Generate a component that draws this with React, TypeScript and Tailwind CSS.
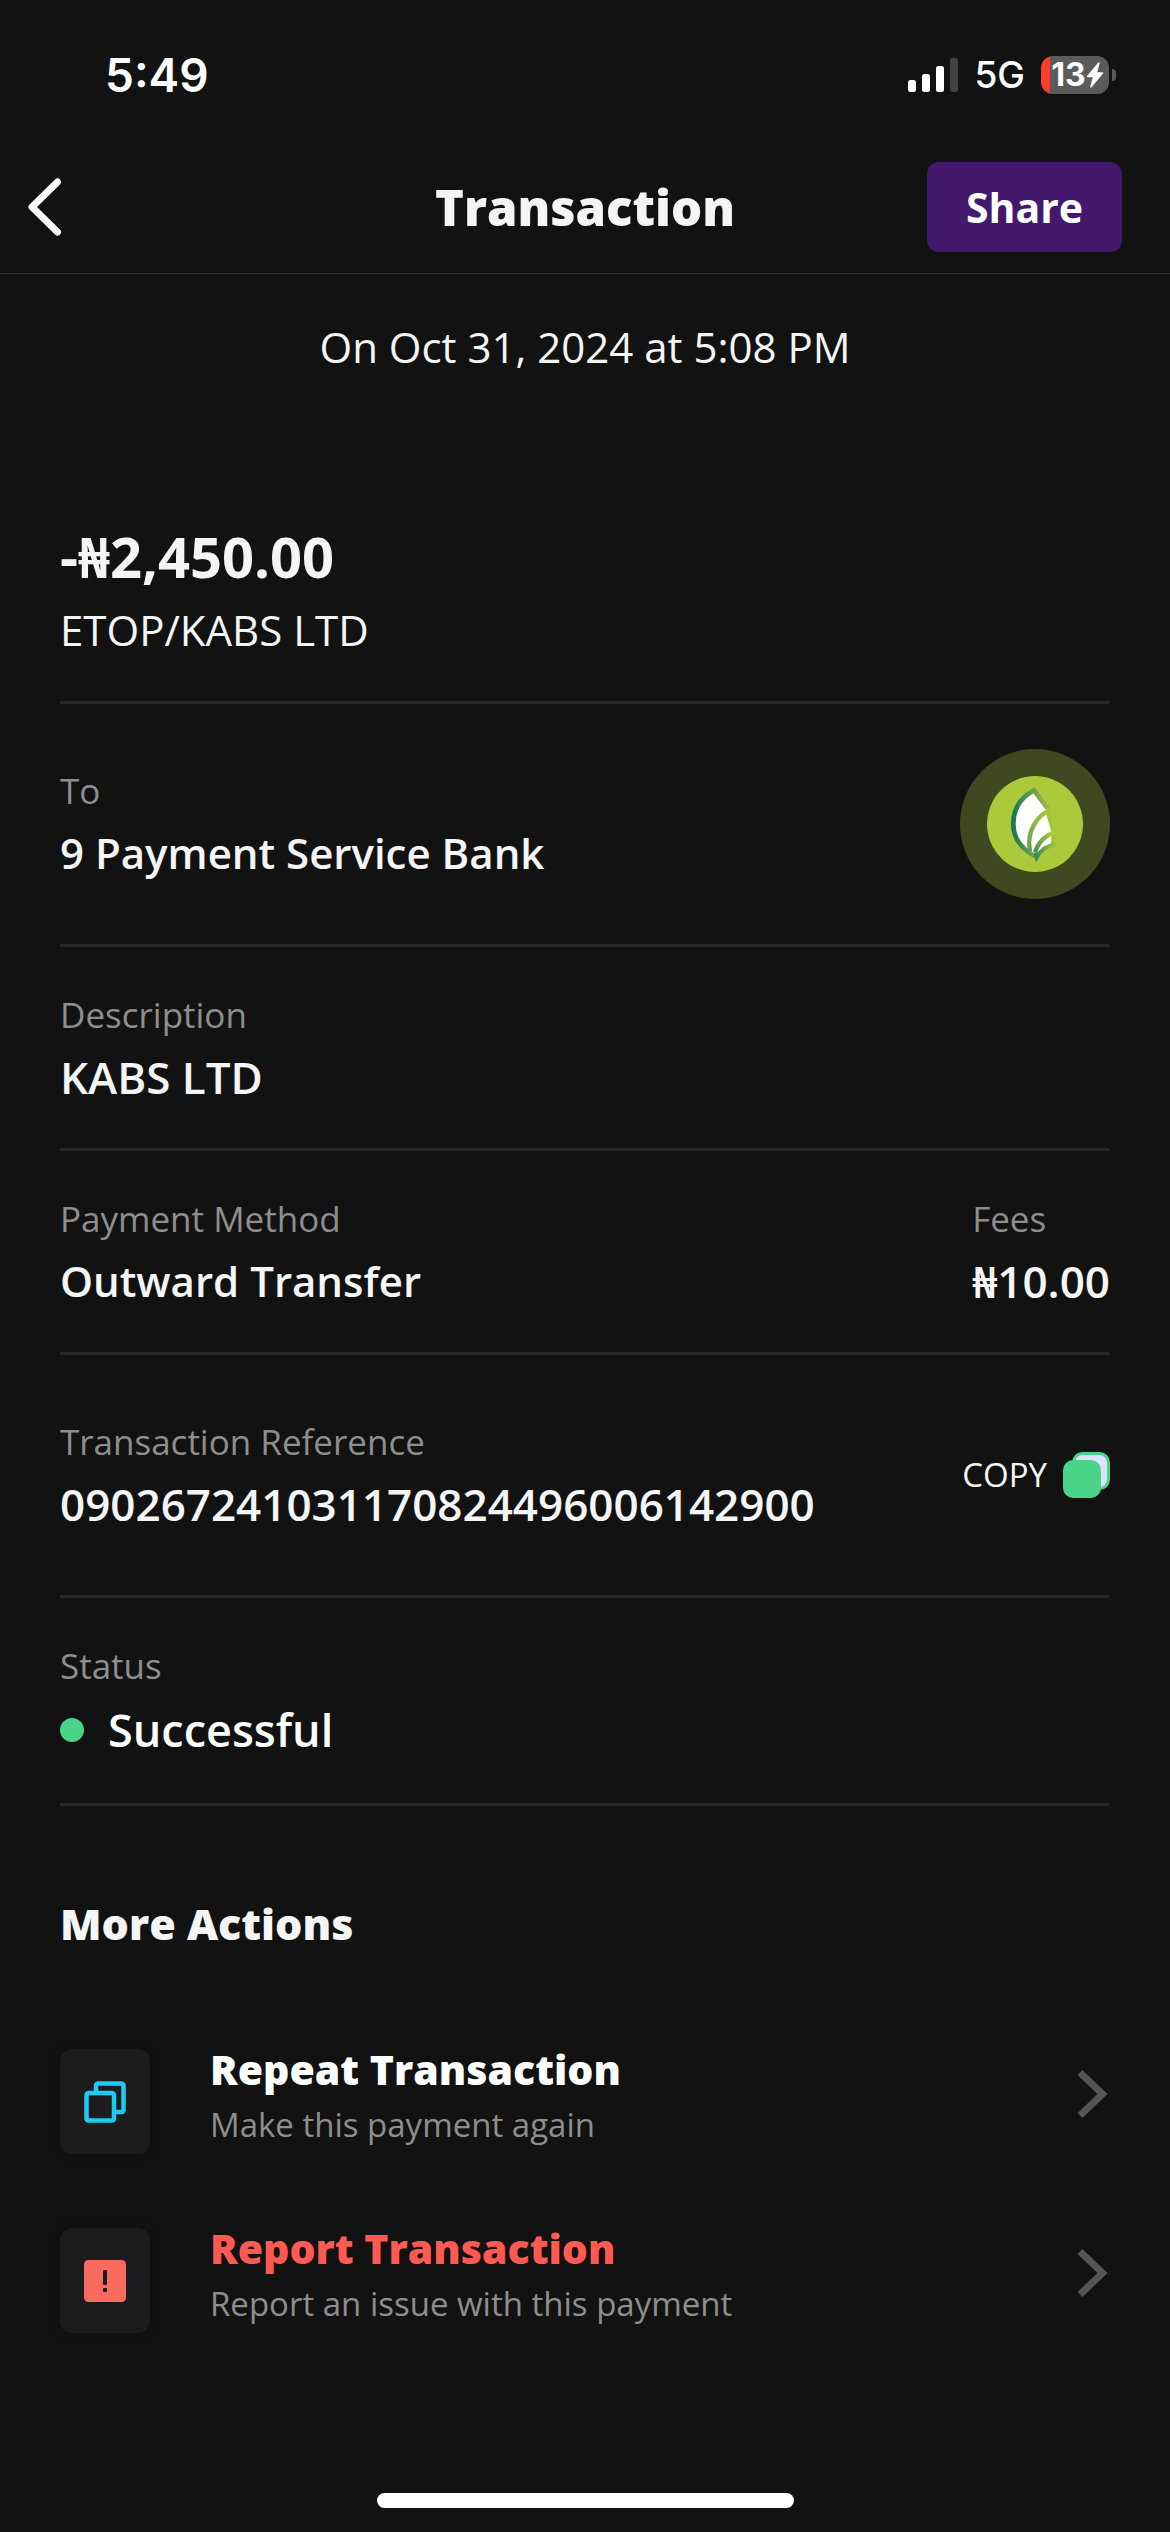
import type { ReactNode } from "react";

const SANS = "font-['Open_Sans','Noto_Sans',sans-serif]";
const SYSTEM = "font-['Inter',sans-serif]";

function StatusBar() {
  return (
    <div className={`${SYSTEM} flex items-center justify-between pt-[47px] pb-[38px] pl-[105px] pr-[54px] text-white`}>
      <time className="text-[46px] leading-[56px] font-semibold">5:49</time>
      <div className="flex items-center">
        <svg width="50" height="34" viewBox="0 0 50 34" className="mr-4" aria-label="Signal strength">
          <rect x="0" y="22" width="8" height="12" rx="2.5" fill="#fff" />
          <rect x="14" y="16" width="8" height="18" rx="2.5" fill="#fff" />
          <rect x="28" y="8" width="8" height="26" rx="2.5" fill="#fff" />
          <rect x="42" y="0" width="8" height="34" rx="2.5" fill="#434343" />
        </svg>
        <span className="mr-4 text-[37px] leading-[56px] font-medium">5G</span>
        <div className="flex items-center gap-[3px]" aria-label="Battery 13 percent, charging">
          <div className="flex h-[38px] w-[68px] items-center justify-center overflow-hidden rounded-[12px] bg-[linear-gradient(90deg,#ff3b30_9px,#5b5b5b_9px)] pl-[5px]">
            <span className="text-[32px] leading-[38px] font-bold">13</span>
            <svg width="18" height="26" viewBox="0 0 18 26" fill="#fff" aria-hidden="true">
              <path d="M12.3.6 1 13.9c-.5.6-.2 1.3.6 1.3h5.2L4.3 24.6c-.3 1.1.6 1.4 1.3.6L17 11.6c.5-.7.2-1.3-.6-1.3h-5.2l2.4-9.1c.3-1.1-.6-1.4-1.3-.6Z" />
            </svg>
          </div>
          <div className="h-3 w-1 rounded-r-full bg-[#5b5b5b]" />
        </div>
      </div>
    </div>
  );
}

function Header() {
  return (
    <header className="grid grid-cols-[1fr_auto_1fr] items-center border-b border-[#333333] py-[21px]">
      <button type="button" aria-label="Back" className="ml-6 justify-self-start">
        <svg width="42" height="66" viewBox="0 0 42 66" fill="none" stroke="#fff" strokeWidth="7" strokeLinecap="round" strokeLinejoin="round">
          <path d="M33.5 8 8 33l25.5 25" />
        </svg>
      </button>
      <h1 className="text-[49px] leading-[68px] font-extrabold text-[#f5f5f5]">Transaction</h1>
      <button type="button" className="mr-12 h-[90px] w-[195px] justify-self-end rounded-[12px] bg-[#42196b] text-[41px] leading-[56px] font-bold text-white">
        Share
      </button>
    </header>
  );
}

function Field({ label, size = "text-[42px]", children }: { label: string; size?: string; children: ReactNode }) {
  return (
    <div className="flex flex-col gap-[10px]">
      <dt className="text-[35px] leading-[48px] text-[#8e8e8e]">{label}</dt>
      <dd className={`${size} leading-[56px] font-semibold text-[#f5f5f5]`}>{children}</dd>
    </div>
  );
}

function BankLogo() {
  return (
    <div className="flex size-[150px] items-center justify-center rounded-full bg-[#40481f]">
      <svg width="96" height="96" viewBox="0 0 288 288" fill="none" aria-label="9 Payment Service Bank logo">
        <defs>
          <linearGradient id="leafA" gradientUnits="userSpaceOnUse" x1="74" y1="140" x2="206" y2="140">
            <stop offset="0" stopColor="#0c7650" />
            <stop offset="0.45" stopColor="#6b9f50" />
            <stop offset="1" stopColor="#abc93b" />
          </linearGradient>
          <linearGradient id="leafB" gradientUnits="userSpaceOnUse" x1="118" y1="230" x2="190" y2="100">
            <stop offset="0" stopColor="#5f9a52" />
            <stop offset="1" stopColor="#abc93b" />
          </linearGradient>
          <linearGradient id="leafC" gradientUnits="userSpaceOnUse" x1="145" y1="240" x2="205" y2="190">
            <stop offset="0" stopColor="#3c8757" />
            <stop offset="1" stopColor="#abc93b" />
          </linearGradient>
        </defs>
        <circle cx="144" cy="144" r="144" fill="#abc93b" />
        <path d="M141 44C98 66 79 100 79 144c0 47 29 78 70 99 13-24 26-33 48-38l4-37-18-68Z" fill="#fff" />
        <path d="M184 100 141 43C98 66 79 100 79 144c0 47 29 78 70 99" stroke="url(#leafA)" strokeWidth="14" />
        <path d="m182 108 18 58-2 40" stroke="#a4c43f" strokeWidth="13" />
        <path d="M196 101c-46 13-79 67-67 125" stroke="url(#leafB)" strokeWidth="13" />
        <path d="M211 167c-33 8-55 27-67 62" stroke="url(#leafC)" strokeWidth="13" />
        <path d="M209 204c-29 4-47 16-60 40l-4-14" stroke="url(#leafC)" strokeWidth="12" />
      </svg>
    </div>
  );
}

function CopyIcon() {
  return (
    <svg width="47" height="46" viewBox="0 0 47 46" aria-hidden="true">
      <rect x="10.5" y="1.5" width="35" height="35" rx="9" fill="#dfe1fb" stroke="#49d489" strokeWidth="3" />
      <rect x="0" y="8" width="38" height="38" rx="10" fill="#49d489" />
    </svg>
  );
}

function RepeatIcon() {
  return (
    <svg width="42" height="42" viewBox="0 0 42 42" fill="none" stroke="#1ecbf0" strokeWidth="4.5" strokeLinejoin="round" aria-hidden="true">
      <path d="M12 10V4.5a2 2 0 0 1 2-2h23.500a2 2 0 0 1 2 2V29a2 2 0 0 1-2 2H32" />
      <rect x="2.5" y="12" width="27.500" height="27.500" rx="2" />
    </svg>
  );
}

function ReportIcon() {
  return (
    <svg width="42" height="42" viewBox="0 0 42 42" aria-hidden="true">
      <rect width="42" height="42" rx="4.5" fill="#f96b5e" />
      <rect x="19" y="10" width="4" height="15" rx="1" fill="#1c1c1e" />
      <rect x="19" y="28" width="4" height="4" rx="1" fill="#1c1c1e" />
    </svg>
  );
}

function Action({ icon, title, note, tone }: { icon: ReactNode; title: string; note: string; tone: string }) {
  return (
    <button type="button" className="flex items-start text-left">
      <span className="mt-2 mr-15 flex h-[105px] w-[90px] shrink-0 items-center justify-center rounded-[12px] bg-[#1c1c1e] shadow-[0_0_15px_rgba(0,0,0,0.2)]">
        {icon}
      </span>
      <span className="flex grow items-center justify-between">
        <span className="flex flex-col gap-[6px]">
          <span className={`text-[41px] leading-[56px] font-extrabold ${tone}`}>{title}</span>
          <span className="text-[33px] leading-[44px] text-[#8e8e8e]">{note}</span>
        </span>
        <svg width="33" height="50" viewBox="0 0 33 50" fill="none" stroke="#555555" strokeWidth="7" aria-hidden="true">
          <path d="M3 3.500 25.500 25 3 46.500" />
        </svg>
      </span>
    </button>
  );
}

const ROW = "flex items-center justify-between border-b-[3px] border-[#272727]";

export default function App() {
  return (
    <div className={`${SANS} flex min-h-screen flex-col bg-[#121212]`}>
      <StatusBar />
      <Header />
      <main className="flex flex-col px-15">
        <p className="pt-[45px] text-center text-[42px] leading-[56px] text-[#f5f5f5]">On Oct 31, 2024 at 5:08 PM</p>

        <section className="mt-[145px] flex flex-col gap-[10px] border-b-[3px] border-[#272727] pb-[43px] text-[#f5f5f5]">
          <p className="text-[56px] leading-[72px] font-bold">-₦2,450.00</p>
          <p className="text-[42px] leading-[56px]">ETOP/KABS LTD</p>
        </section>

        <dl className={`${ROW} py-[45px]`}>
          <Field label="To">9 Payment Service Bank</Field>
          <BankLogo />
        </dl>
        <dl className={`${ROW} pt-[44px] pb-[43px]`}>
          <Field label="Description" size="text-[44px]">KABS LTD</Field>
        </dl>
        <dl className={`${ROW} pt-[44px] pb-[43px]`}>
          <Field label="Payment Method">Outward Transfer</Field>
          <Field label="Fees" size="text-[44px]">₦10.00</Field>
        </dl>
        <dl className={`${ROW} py-[63px]`}>
          <Field label="Transaction Reference" size="text-[44px]">090267241031170824496006142900</Field>
          <button type="button" className="flex items-center gap-4 text-[33px] leading-[44px] text-[#f5f5f5]">
            COPY
            <CopyIcon />
          </button>
        </dl>
        <dl className={`${ROW} pt-[44px] pb-[43px]`}>
          <Field label="Status">
            <span className="flex items-center gap-6 text-[45px] leading-[60px] text-white">
              <span className="size-6 rounded-full bg-[#49d489]" />
              Successful
            </span>
          </Field>
        </dl>

        <h2 className="mt-[88px] text-[43px] leading-[60px] font-extrabold text-[#f5f5f5]">More Actions</h2>
        <div className="mt-[87px] flex flex-col gap-[66px]">
          <Action icon={<RepeatIcon />} title="Repeat Transaction" note="Make this payment again" tone="text-white" />
          <Action icon={<ReportIcon />} title="Report Transaction" note="Report an issue with this payment" tone="text-[#ff5a52]" />
        </div>
      </main>
      <div className="mt-auto flex justify-center pb-6">
        <div className="h-[15px] w-[417px] rounded-full bg-white" />
      </div>
    </div>
  );
}
